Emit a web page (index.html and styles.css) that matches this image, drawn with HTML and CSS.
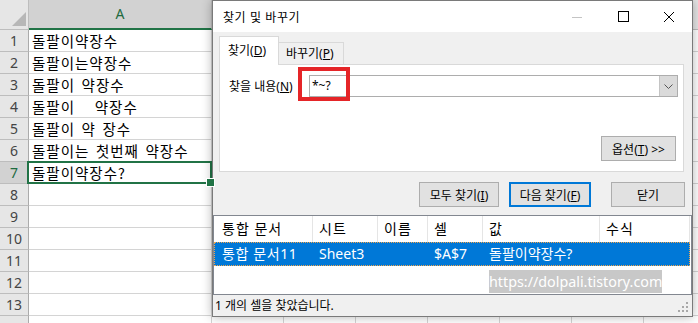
FILE: index.html
```html
<!DOCTYPE html>
<html lang="ko">
<head>
  <meta charset="UTF-8" />
  <title>찾기 및 바꾸기</title>
  <link rel="stylesheet" href="styles.css">
</head>
<body>
  <div class="sheet">
    <div class="hrow">
      <div class="corner">
        <svg width="28" height="29" viewBox="0 0 28 29"><polygon points="26,12 26,26 12,26" fill="#b7b7b7"/></svg>
      </div>
      <div class="colhead">A</div>
      <div class="colrest"></div>
    </div>
    <div class="row"><div class="rh">1</div><div class="cell">돌팔이약장수</div><div class="rest"></div></div>
    <div class="row"><div class="rh">2</div><div class="cell">돌팔이는약장수</div><div class="rest"></div></div>
    <div class="row"><div class="rh">3</div><div class="cell">돌팔이 약장수</div><div class="rest"></div></div>
    <div class="row"><div class="rh">4</div><div class="cell">돌팔이&nbsp;&nbsp;&nbsp;약장수</div><div class="rest"></div></div>
    <div class="row"><div class="rh">5</div><div class="cell">돌팔이 약 장수</div><div class="rest"></div></div>
    <div class="row"><div class="rh">6</div><div class="cell">돌팔이는 첫번째 약장수</div><div class="rest"></div></div>
    <div class="row active"><div class="rh">7</div><div class="cell cur">돌팔이약장수?</div><div class="rest"></div></div>
    <div class="row"><div class="rh">8</div><div class="cell"></div><div class="rest"></div></div>
    <div class="row"><div class="rh">9</div><div class="cell"></div><div class="rest"></div></div>
    <div class="row"><div class="rh">10</div><div class="cell"></div><div class="rest"></div></div>
    <div class="row"><div class="rh">11</div><div class="cell"></div><div class="rest"></div></div>
    <div class="row"><div class="rh">12</div><div class="cell"></div><div class="rest"></div></div>
    <div class="row"><div class="rh">13</div><div class="cell"></div><div class="rest"></div></div>
    <div class="row"><div class="rh"></div><div class="cell"></div><div class="rest"></div></div>
  </div>

  <div class="dialog">
    <div class="titlebar">
      <div class="title">찾기 및 바꾸기</div>
      <div class="winbtns">
        <span><svg width="10" height="10" viewBox="0 0 10 10"><line x1="0" y1="5.5" x2="10" y2="5.5" stroke="#c4c4c4"/></svg></span>
        <span><svg width="11" height="11" viewBox="0 0 11 11"><rect x="0.5" y="0.5" width="10" height="10" fill="none" stroke="#000"/></svg></span>
        <span><svg width="10" height="10" viewBox="0 0 10 10"><path d="M0 0L10 10M10 0L0 10" stroke="#000" stroke-width="1"/></svg></span>
      </div>
    </div>

    <div class="tabs">
      <div class="tab on">찾기(<u>D</u>)</div>
      <div class="tab">바꾸기(<u>P</u>)</div>
    </div>
    <div class="panel">
      <div class="findrow">
        <label class="lbl">찾을 내용(<u>N</u>)</label>
        <div class="combo">
          <span class="val">*~?</span>
          <span class="drop"><svg width="9" height="5" viewBox="0 0 9 5"><polyline points="0.5,0.5 4.5,4.5 8.5,0.5" fill="none" stroke="#555"/></svg></span>
        </div>
      </div>
      <button class="btn opt">옵션(<u>T</u>) &gt;&gt;</button>
    </div>

    <div class="actions">
      <button class="btn all">모두 찾기(<u>I</u>)</button>
      <button class="btn next">다음 찾기(<u>F</u>)</button>
      <button class="btn close">닫기</button>
    </div>

    <div class="results">
      <div class="lrow head">
        <span class="c1">통합 문서</span><span class="c2">시트</span><span class="c3">이름</span><span class="c4">셀</span><span class="c5">값</span><span class="c6">수식</span>
      </div>
      <div class="lrow picked">
        <span class="c1">통합 문서11</span><span class="c2">Sheet3</span><span class="c3"></span><span class="c4">$A$7</span><span class="c5">돌팔이약장수?</span><span class="c6"></span>
      </div>
    </div>
    <div class="status">1 개의 셀을 찾았습니다.</div>

    <div class="mark"></div>
    <div class="watermark">https://dolpali.tistory.com</div>
    <svg class="grip" width="11" height="11" viewBox="0 0 11 11">
      <rect x="8" y="0" width="2" height="2" fill="#a8a8a8"/>
      <rect x="4" y="4" width="2" height="2" fill="#a8a8a8"/>
      <rect x="8" y="4" width="2" height="2" fill="#a8a8a8"/>
      <rect x="0" y="8" width="2" height="2" fill="#a8a8a8"/>
      <rect x="4" y="8" width="2" height="2" fill="#a8a8a8"/>
      <rect x="8" y="8" width="2" height="2" fill="#a8a8a8"/>
    </svg>
  </div>
</body>
</html>
```

FILE: styles.css
```css
* {
  box-sizing: border-box;
}

body {
  margin: 0;
  width: 698px;
  height: 323px;
  overflow: hidden;
  position: relative;
  background: #fff;
  font-family: "Noto Sans", "Noto Sans CJK KR", sans-serif;
}

/* worksheet */
.sheet {
  width: 698px;
}

.hrow, .row {
  display: flex;
}

.hrow {
  height: 30px;
  background: #e6e6e6;
}

.corner {
  width: 29px;
  border-right: 1px solid #bdbdbd;
  border-bottom: 1px solid #bdbdbd;
}

.corner svg {
  display: block;
}

.colhead {
  width: 183px;
  background: #d2d2d2;
  border-right: 1px solid #bdbdbd;
  border-bottom: 2px solid #217346;
  text-align: center;
  line-height: 28px;
  font-size: 14px;
  color: #1e6b3f;
}

.colrest {
  flex: 1;
  border-bottom: 1px solid #bdbdbd;
  background: repeating-linear-gradient(to right, transparent 0 71px, #bdbdbd 71px 72px);
}

.row {
  height: 22px;
}

.rh {
  width: 29px;
  background: #e6e6e6;
  border-right: 1px solid #ababab;
  border-bottom: 1px solid #bdbdbd;
  text-align: center;
  font-size: 14px;
  line-height: 21px;
  color: #444;
}

.row.active .rh {
  background: #d2d2d2;
  color: #1e6b3f;
}

.cell {
  width: 183px;
  border-right: 1px solid #d4d4d4;
  border-bottom: 1px solid #d4d4d4;
  padding-left: 3px;
  font-family: "Noto Sans CJK KR", sans-serif;
  font-size: 14.5px;
  letter-spacing: 1px;
  word-spacing: 1.5px;
  line-height: 21px;
  white-space: nowrap;
  color: #000;
}

.cell.cur {
  position: relative;
}

.cell.cur::after {
  content: "";
  position: absolute;
  left: -2px;
  top: -1px;
  right: -1px;
  bottom: -1px;
  border: 2px solid #217346;
}

.cell.cur::before {
  content: "";
  position: absolute;
  right: -4px;
  bottom: -4px;
  width: 7px;
  height: 7px;
  background: #217346;
  border: 1px solid #fff;
  z-index: 1;
}

.rest {
  flex: 1;
  border-bottom: 1px solid #d4d4d4;
  background: repeating-linear-gradient(to right, transparent 0 71px, #d4d4d4 71px 72px);
}

/* find dialog */
.dialog {
  position: absolute;
  left: 212px;
  top: 0;
  width: 481px;
  height: 317px;
  border: 1px solid #7a7a7a;
  background: #f0f0f0;
  box-shadow: 0 0 10px rgba(0, 0, 0, 0.3);
  display: flex;
  flex-direction: column;
  font-size: 12px;
  color: #000;
}

.titlebar {
  height: 31px;
  flex: none;
  background: #fff;
  display: flex;
  align-items: center;
}

.title {
  padding-left: 10px;
  font-family: "Noto Sans CJK KR", sans-serif;
  letter-spacing: 0.5px;
}

.winbtns {
  margin-left: auto;
  display: flex;
  height: 100%;
}

.winbtns span {
  width: 46px;
  display: flex;
  align-items: center;
  justify-content: center;
}

.winbtns svg {
  display: block;
}

.tabs {
  display: flex;
  align-items: flex-end;
  height: 29px;
  margin: 4px 0 -1px 6px;
  position: relative;
  z-index: 1;
}

.tab {
  height: 22px;
  width: 65px;
  margin-bottom: 1px;
  border: 1px solid #d9d9d9;
  border-left: none;
  border-bottom: none;
  background: #f0f0f0;
  padding-left: 7px;
  line-height: 21px;
  white-space: nowrap;
}

.tab.on {
  height: 29px;
  width: 60px;
  margin-bottom: 0;
  border-left: 1px solid #d9d9d9;
  background: #fff;
  padding-left: 8px;
  line-height: 28px;
}

.panel {
  height: 108px;
  flex: none;
  margin: 0 8px 0 6px;
  background: #fff;
  border: 1px solid #d9d9d9;
  display: flex;
  flex-direction: column;
  padding: 10px 5px 10px 9px;
}

.findrow {
  display: flex;
  align-items: center;
  height: 22px;
}

.lbl {
  width: 80px;
  white-space: nowrap;
}

.combo {
  flex: 1;
  height: 22px;
  border: 1px solid #adadad;
  display: flex;
}

.val {
  flex: 1;
  padding-left: 2px;
  line-height: 20px;
}

.drop {
  width: 18px;
  background: #dadada;
  border-left: 1px solid #c4c4c4;
  display: flex;
  align-items: center;
  justify-content: center;
}

.btn {
  height: 25px;
  border: 1px solid #adadad;
  background: #e1e1e1;
  font-family: inherit;
  font-size: 12px;
  color: #000;
  padding: 0;
  white-space: nowrap;
}

.opt {
  width: 75px;
  margin-top: auto;
  margin-right: 2px;
  align-self: flex-end;
}

.actions {
  display: flex;
  justify-content: flex-end;
  margin-top: 10px;
  padding-right: 7px;
  flex: none;
}

.all {
  width: 80px;
}

.next {
  width: 82px;
  margin-left: 10px;
  border: 2px solid #0078d7;
}

.close {
  width: 74px;
  margin-left: 20px;
}

.results {
  height: 80px;
  flex: none;
  margin-top: 8px;
  border: 1px solid #828790;
  background: #fff;
}

.lrow {
  display: flex;
  white-space: nowrap;
  font-size: 14px;
}

.lrow span {
  padding-left: 6px;
  overflow: hidden;
}

.lrow .c1 { width: 99px; padding-left: 8px; }
.lrow .c2 { width: 65px; }
.lrow .c3 { width: 50px; }
.lrow .c4 { width: 55px; }
.lrow .c5 { width: 117px; }
.lrow .c6 { width: 90px; }

.head {
  height: 26px;
  line-height: 26px;
  letter-spacing: 1px;
}

.head span {
  border-right: 1px solid #e5e5e5;
}

.picked {
  height: 24px;
  line-height: 23px;
  width: 476px;
  background: #0078d7;
  color: #fff;
  outline: 1px dotted #f3a64c;
  outline-offset: -1px;
}

.picked .c1 {
  letter-spacing: 0.6px;
}

.status {
  flex: 1;
  padding-left: 2px;
  line-height: 21px;
  font-size: 12px;
}

.mark {
  position: absolute;
  left: 85px;
  top: 66px;
  width: 52px;
  height: 34px;
  border: 4px solid #e52528;
}

.watermark {
  position: absolute;
  left: 276px;
  top: 269px;
  width: 173px;
  height: 23px;
  background: #c8c8c8;
  color: #fff;
  font-size: 14.3px;
  line-height: 23px;
  text-align: center;
  white-space: nowrap;
}

.grip {
  position: absolute;
  right: 3px;
  bottom: 3px;
}
```
